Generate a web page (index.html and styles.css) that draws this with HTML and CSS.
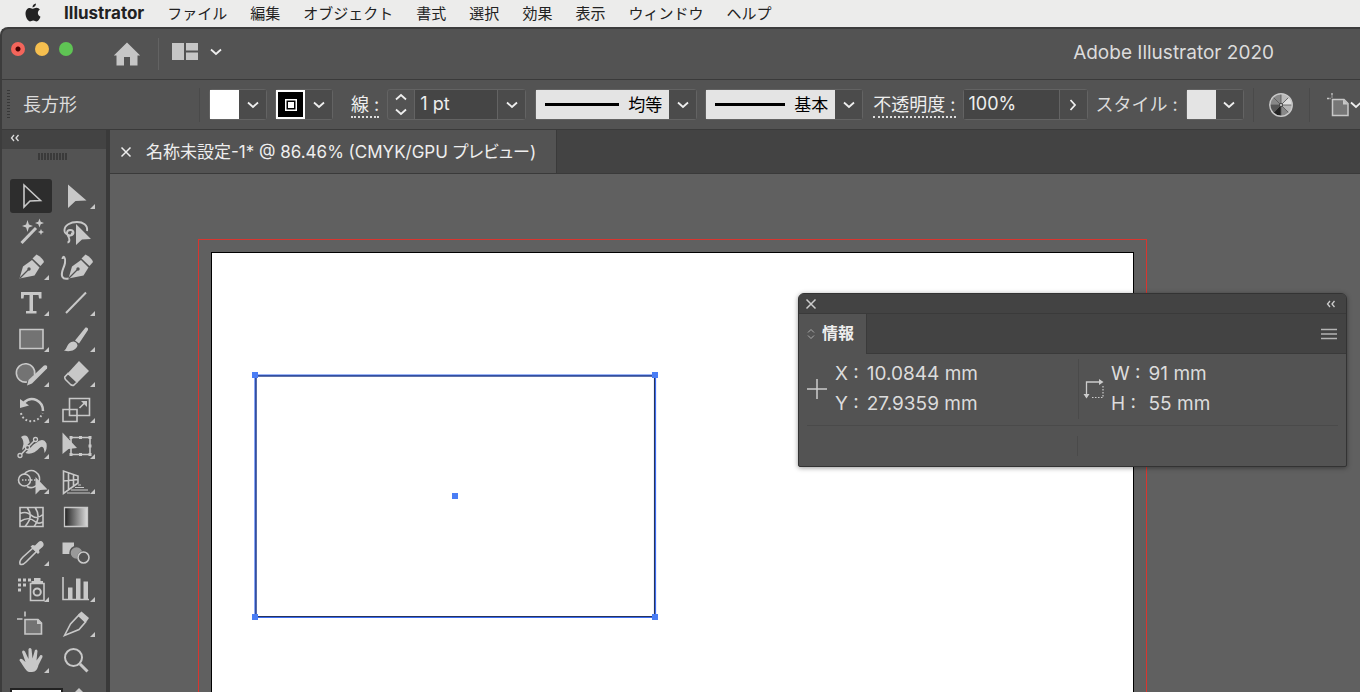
FILE: index.html
```html
<!DOCTYPE html>
<html lang="ja">
<head>
<meta charset="utf-8">
<title>Adobe Illustrator 2020</title>
<link rel="stylesheet" href="styles.css">
</head>
<body>
<svg width="0" height="0" class="defs" aria-hidden="true">
  <symbol id="chev" viewBox="0 0 12 8"><path d="M1 1.5 6 6 11 1.5" fill="none" stroke="currentColor" stroke-width="1.8"/></symbol>
  <symbol id="x" viewBox="0 0 12 12"><path d="M1.500 1.500 10.500 10.500M10.500 1.500 1.500 10.500" fill="none" stroke="currentColor" stroke-width="1.500"/></symbol>
  <symbol id="dbl" viewBox="0 0 10 8"><path d="M4 1 1.500 4 4 7M8.500 1 6 4 8.500 7" fill="none" stroke="currentColor" stroke-width="1.300"/></symbol>
  <linearGradient id="grad"><stop offset="0" stop-color="#222"/><stop offset="1" stop-color="#ddd"/></linearGradient>
</svg>

<nav class="menubar">
  <svg class="apple" viewBox="0 0 16 20"><path d="M11 .5c.1 2-1.600 3.900-3.500 3.900C7.300 2.500 9 .800 11 .5zM8 5.700c.8 0 1.900-1 3.500-1 1.400 0 2.700.8 3.400 1.900-3 1.700-2.500 5.900.6 7.100-.9 2.300-2.200 4.700-4 4.700-1.300 0-1.700-.8-3.300-.8s-2.100.8-3.300.8C2.800 18.400.5 14.200.5 10.600c0-3.700 2.200-5.700 4.300-5.700 1.400 0 2.500.8 3.200.8z" fill="#222"/></svg>
  <a href="#" class="app">Illustrator</a>
  <a href="#">ファイル</a><a href="#">編集</a><a href="#">オブジェクト</a><a href="#">書式</a><a href="#">選択</a><a href="#">効果</a><a href="#">表示</a><a href="#">ウィンドウ</a><a href="#">ヘルプ</a>
</nav>

<div class="window">
  <header class="titlebar">
    <div class="lights">
      <button class="light red" aria-label="閉じる"></button><button class="light yellow" aria-label="しまう"></button><button class="light green" aria-label="拡大"></button>
    </div>
    <button class="plain home" aria-label="ホーム"><svg width="28" height="24" viewBox="0 0 28 24"><path d="M14 .5 .8 13.500H3.500V23.500H11V15H17V23.500H24.500V13.500H27.200z" fill="#c6c6c6"/></svg></button>
    <button class="plain arrange" aria-label="ドキュメントレイアウト"><svg width="26" height="18" viewBox="0 0 26 18"><path d="M0 0H12V17H0zM14 0H26V7.500H14zM14 9.500H26V17H14z" fill="#c6c6c6"/></svg><svg class="chev"><use href="#chev"/></svg></button>
    <h1>Adobe Illustrator 2020</h1>
  </header>

  <section class="control">
    <span class="grip"></span>
    <span class="kind">長方形</span>
    <span class="rule"></span>
    <div class="combo fill"><button class="swatch white" aria-label="塗り"></button><button class="drop" aria-label="塗りを選択"><svg class="chev"><use href="#chev"/></svg></button></div>
    <div class="combo stroke"><button class="swatch black" aria-label="線の色"><svg width="12" height="12" viewBox="0 0 12 12"><path d="M.75.75h10.500v10.500H.75z" fill="none" stroke="#fff" stroke-width="1.500"/><path d="M3 3h6v6H3z" fill="#fff"/></svg></button><button class="drop" aria-label="線の色を選択"><svg class="chev"><use href="#chev"/></svg></button></div>
    <label class="link" for="weight">線 :</label>
    <div class="combo weight">
      <span class="steps"><button class="plain" aria-label="増やす"><svg class="chev up"><use href="#chev"/></svg></button><button class="plain" aria-label="減らす"><svg class="chev"><use href="#chev"/></svg></button></span>
      <input id="weight" type="text" value="1 pt">
      <button class="drop" aria-label="線幅を選択"><svg class="chev"><use href="#chev"/></svg></button>
    </div>
    <div class="combo profile"><select aria-label="可変線幅プロファイル"><option>均等</option></select><button class="drop" aria-label="プロファイルを選択"><svg class="chev"><use href="#chev"/></svg></button></div>
    <div class="combo brush"><select aria-label="ブラシ定義"><option>基本</option></select><button class="drop" aria-label="ブラシを選択"><svg class="chev"><use href="#chev"/></svg></button></div>
    <label class="link" for="opacity">不透明度 :</label>
    <div class="combo opacity"><input id="opacity" type="text" value="100%"><button class="drop" aria-label="不透明度を変更"><svg class="chev side"><use href="#chev"/></svg></button></div>
    <span class="style-label">スタイル :</span>
    <div class="combo"><button class="swatch pale" aria-label="スタイル"></button><button class="drop" aria-label="スタイルを選択"><svg class="chev"><use href="#chev"/></svg></button></div>
    <span class="rule after"></span>
    <button class="plain wheel" aria-label="オブジェクトを再配色"><svg width="26" height="26" viewBox="0 0 26 26"><circle cx="13" cy="13" r="11" fill="#888"/><path d="M13 13V2A11 11 0 0 1 21 5.500z" fill="#bbb"/><path d="M13 13 21 5.500A11 11 0 0 1 24 13z" fill="#ddd"/><path d="M13 13H24A11 11 0 0 1 21 20.500z" fill="#b4b4b4"/><path d="M13 13V24A11 11 0 0 1 5.500 21z" fill="#222"/><path d="M13 13 5.500 21A11 11 0 0 1 2 13z" fill="#555"/><path d="M13 2V24M2 13H24M5.200 5.200 20.800 20.800M20.800 5.200 5.200 20.800" stroke="#555" stroke-width=".8"/><circle cx="13" cy="13" r="2" fill="#444"/><circle cx="13" cy="13" r="1" fill="#ddd"/><circle cx="13" cy="13" r="11.200" fill="none" stroke="#c8c8c8" stroke-width="1.500"/></svg></button>
    <span class="rule"></span>
    <button class="plain align" aria-label="アートボードに整列"><svg width="24" height="24" viewBox="0 0 24 24"><path d="M6.500 6.500H18L22 10.500V22.500H6.500z" fill="#777" stroke="#c8c8c8" stroke-width="1.500"/><path d="M17 6.500V11.500H22z" fill="#c8c8c8"/><path d="M6 0V2.500M6 3.500V4.500M1 5.500H3.500M4.500 5.500H5" stroke="#c8c8c8" stroke-width="1.300"/></svg><svg class="chev"><use href="#chev"/></svg></button>
  </section>

  <main class="work">
    <aside class="tools">
      <div class="tools-head"><button class="plain" aria-label="折りたたむ"><svg width="10" height="8"><use href="#dbl"/></svg></button></div>
      <div class="tools-body">
        <span class="handle"></span>
        <div class="grid">
          <button class="tool on" aria-label="選択"><svg viewBox="0 0 42 34"><path d="M14 6V28L20 22 30.500 21.500z" class="o"/></svg></button>
          <button class="tool more" aria-label="ダイレクト選択"><svg viewBox="0 0 42 34"><path d="M12 5.500V29L19.500 22 30.500 21.500z" class="f"/></svg></button>

          <button class="tool" aria-label="自動選択"><svg viewBox="0 0 42 34"><path d="M11.500 28 26 13" class="o" stroke-width="3"/><path d="M17.500 5 18.900 9.600 23 11 18.900 12.400 17.500 17 16.100 12.400 12 11 16.100 9.600zM29.500 3.500 30.700 6.800 34 8 30.700 9.200 29.500 12.500 28.300 9.200 25 8 28.300 6.800zM31 14 31.900 16.100 34 17 31.900 17.900 31 20 30.100 17.900 28 17 30.100 16.100z" class="f"/></svg></button>
          <button class="tool" aria-label="なげなわ"><svg viewBox="0 0 42 34"><path d="M31 16C32 10 27 7 21 7S8 10 8.500 16C9 20 17 22.500 17.500 18 17.500 14 11 14 11 18 11 21.500 16.500 22 16 17.500M11.500 20C13.500 23 14.500 27 11.500 27.500" class="o" stroke-width="1.9"/><path d="M20 9V30L26 24.500 35 24z" class="f"/></svg></button>

          <button class="tool more" aria-label="ペン"><svg viewBox="0 0 42 34"><g id="nib"><path d="M9.500 28.500 13 16.500 22 10 29.500 17.500 24.500 25.500z" class="f"/><path d="M10 28 18.500 19.500" stroke="#535353" stroke-width="1.300"/><circle cx="19" cy="19" r="1.700" fill="#535353"/><path d="M22.500 8.500 26.500 4.500Q33 8 34 12L30.500 16z" class="f"/></g></svg></button>
          <button class="tool" aria-label="曲線"><svg viewBox="0 0 42 34"><use href="#nib" x="3"/><path d="M6.500 9C7 4.500 10 7.500 9 13S4 23 6.500 27C7.500 29 10 29 12.500 28.500" class="o" stroke-width="2"/></svg></button>

          <button class="tool more" aria-label="文字"><svg viewBox="0 0 42 34"><path d="M11 6H31.500V12.500H29L28.500 9H23V25H26.500V27.500H16V25H19.500V9H14L13.500 12.500H11z" class="f"/></svg></button>
          <button class="tool more" aria-label="直線"><svg viewBox="0 0 42 34"><path d="M10 27 30 6.500" class="o" stroke-width="2"/></svg></button>

          <button class="tool more" aria-label="長方形"><svg viewBox="0 0 42 34"><path d="M10 7.500H33V26.500H10z" class="o g"/></svg></button>
          <button class="tool more" aria-label="ブラシ"><svg viewBox="0 0 42 34"><path d="M19 18.500 29.500 5.500Q32.500 5 32 8L23 21.500zM17.500 19.500Q21 20 21.500 23.500C20 29 13 30 8 28.500 11.500 27.500 10.500 20 17.500 19.500z" class="f"/></svg></button>

          <button class="tool more" aria-label="Shaper"><svg viewBox="0 0 42 34"><path d="M17 25A9.200 9.200 0 1 1 24.500 18" class="o g"/><path d="M17 28.500 18.500 23 34 8.500Q38 7.500 37 11.500L22 26.500z" class="f"/></svg></button>
          <button class="tool more" aria-label="消しゴム"><svg viewBox="0 0 42 34"><path d="M23 4 33 14 21.500 25.500 12 16z" class="f"/><path d="M12 16.500 8.800 20Q8.500 21 9.500 22.500L14.500 27.500Q16.500 29 18 28L21 25z" class="o"/></svg></button>

          <button class="tool more" aria-label="回転"><svg viewBox="0 0 42 34"><path d="M14 9.500C22 2 33 8 33 18" class="o" stroke-width="2.500"/><path d="M10 6V15L19 12.500z" class="f"/><path d="M11 20C13 30 28 32 32.500 20" class="o" stroke-width="2" stroke-dasharray="1.800 2.300"/></svg></button>
          <button class="tool more" aria-label="拡大・縮小"><svg viewBox="0 0 42 34"><path d="M13.500 5.500H33.500V22.500H13.500zM7 16.500H21V28.500H7zM23.500 15 29 9.500" class="o"/><path d="M25 8H31V14z" class="f"/></svg></button>

          <button class="tool more" aria-label="線幅"><svg viewBox="0 0 42 34"><path d="M11 8Q17 4 19 11 20.500 18 26 14 33 8 36.500 14.500 37.500 20 34.500 24 34 15 29.500 19 24 25.500 17 24.500 10.500 23 13 17 14.500 12 11 8z" class="f"/><path d="M10 26.500 25.500 10.500" stroke="#535353" stroke-width="4"/><path d="M10 26.500 25.500 10.500" class="o"/><g fill="#535353"><circle cx="10" cy="26.500" r="2" class="ring"/><circle cx="17.500" cy="18.500" r="2" class="ring"/><circle cx="25.500" cy="10.500" r="2" class="ring"/></g></svg></button>
          <button class="tool more" aria-label="自由変形"><svg viewBox="0 0 42 34"><path d="M15 8.500H34V25.500H15z" class="o"/><path d="M6.500 3.500V25L12.500 20 21 19z" class="f"/><path d="M13.500 7h3v3h-3zM23 7h3v3h-3zM32.500 7h3v3h-3zM32.500 15.500h3v3h-3zM32.500 24h3v3h-3zM23 24h3v3h-3zM13.500 24h3v3h-3z" class="f"/></svg></button>

          <button class="tool more" aria-label="シェイプ形成"><svg viewBox="0 0 42 34"><path d="M14 9.500A8.500 8.500 0 1 1 17 21.500" class="o"/><circle cx="14.500" cy="15" r="6" class="o"/><path d="M12 15H26" class="o" stroke-dasharray="1.500 1.500"/><path d="M25.500 12V29.500L30 25 37.500 24.500z" class="f"/></svg></button>
          <button class="tool more" aria-label="遠近グリッド"><svg viewBox="0 0 42 34"><path d="M7.500 6V28.500L22 18V11zM12.500 8V25M17.500 9.500V21M7.500 16 22 14.500" class="o"/><path d="M22 20H25M19 22.500H28M15 25H32M11 28H34" class="o" stroke-width="1"/></svg></button>

          <button class="tool" aria-label="メッシュ"><svg viewBox="0 0 42 34"><path d="M10 7.500H33V26.500H10zM10 13.500C17 11 19 14 23 16.500S30 17 33 14.500M10 21.500C17 17 21 18 25 21.500S31 22.500 33 22M17 7.500C21.500 13 22 19 15 26.500M25 7.500C29 13 29 20 24 26.500" class="o"/></svg></button>
          <button class="tool" aria-label="グラデーション"><svg viewBox="0 0 42 34"><path d="M8.500 7.500H31.500V26.500H8.500z" fill="url(#grad)" stroke="#c8c8c8" stroke-width="1.300"/></svg></button>

          <button class="tool more" aria-label="スポイト"><svg viewBox="0 0 42 34"><path d="M10 28C9 25 11 23 13 21L23 12 26.500 15.500 16 26C14 28 12 29.500 10 28z" class="o"/><path d="M20.500 10.500 22.500 9 25 9.500 28.500 6Q31 4 33 6.500 34.500 9 32.500 11L29 14 29.500 16.500 28 18z" class="f"/></svg></button>
          <button class="tool" aria-label="ブレンド"><svg viewBox="0 0 42 34"><path d="M6.500 6.500H18V18H6.500z" class="f"/><circle cx="20.500" cy="17" r="6.500" fill="#999" stroke="#535353" stroke-width="1.500"/><circle cx="27.500" cy="21.500" r="6.500" fill="#535353"/><circle cx="27.500" cy="21.500" r="5.500" class="o"/></svg></button>

          <button class="tool more" aria-label="シンボルスプレー"><svg viewBox="0 0 42 34"><path d="M8 6.500h3v3H8zM13 6.500h3v3h-3zM18 6.500h3v3h-3zM8 11.500h3v3H8zM13 11.500h3v3h-3zM8 16.500h3v3H8zM24 6h6.500v3H33v2H21.500V9H24z" class="f"/><path d="M20.500 11.500H34V28.500H20.500z" class="o"/><circle cx="27.200" cy="20" r="3.600" class="o" stroke-width="2"/></svg></button>
          <button class="tool more" aria-label="棒グラフ"><svg viewBox="0 0 42 34"><path d="M7 5V27.500H33" class="o"/><path d="M12 15.500h4.500V27H12zM20 6.500h4.500V27H20zM27.500 9.500H32V27h-4.500z" class="f"/></svg></button>

          <button class="tool" aria-label="アートボード"><svg viewBox="0 0 42 34"><path d="M15 12.500H28L31.500 16V27H15z" class="o g"/><path d="M27 12V17H32z" class="f"/><path d="M7 12H12.500M15 4.500V9.500" class="o"/></svg></button>
          <button class="tool more" aria-label="スライス"><svg viewBox="0 0 42 34"><path d="M8.500 28.500 14.500 17 22.500 8.500 29.500 15 23 22.500z" class="o"/><path d="M22 7.500 25.500 4.500 33 11 29.500 16z" class="f"/></svg></button>

          <button class="tool more" aria-label="手のひら"><svg viewBox="0 0 42 34"><path d="M17 28C14 25 12 20.500 9.500 17.500Q9.500 15 12 16L15.500 19 12 9Q13 6.500 15 8.500L18.500 16 18.500 6Q20 4 21.500 6L22.500 15.500 25 7Q27 5.500 27.500 8L26.500 17.500 30.500 12Q33 11.500 32.500 14L28.500 22C27.500 26 26 29 22 29 19.500 29 18 29 17 28z" class="f"/></svg></button>
          <button class="tool" aria-label="ズーム"><svg viewBox="0 0 42 34"><circle cx="17.500" cy="14.500" r="8.500" class="o" stroke-width="2"/><path d="M24 21 31.500 28.500" class="o" stroke-width="3"/></svg></button>
        </div>
        <div class="colors"><span class="fillbox"></span><svg width="8" height="4" viewBox="0 0 8 4"><path d="M0 4 4 0 8 4z" fill="#c8c8c8"/></svg></div>
      </div>
    </aside>

    <section class="doc">
      <div class="tabs"><div class="tab"><button class="plain" aria-label="閉じる"><svg width="12" height="12"><use href="#x"/></svg></button><span>名称未設定-1* @ 86.46% (CMYK/GPU プレビュー)</span></div></div>
      <div class="canvas">
        <div class="bleed"></div>
        <div class="artboard"></div>
        <svg class="selection" viewBox="0 0 408 250"><path d="M4.500 4.500H404V246H4.500z" fill="none" stroke="#3c6cf0" stroke-width="2.200"/><path d="M5 5H403.500V245.500H5z" fill="none" stroke="#26335c" stroke-width="1"/><path d="M1 1h6v6H1zM401 1h6v6h-6zM1 243h6v6H1zM401 243h6v6h-6zM201 122h6v6h-6z" fill="#4a7df5"/></svg>
        <aside class="info">
          <div class="info-head"><button class="plain" aria-label="閉じる"><svg width="12" height="12"><use href="#x"/></svg></button><button class="plain" aria-label="折りたたむ"><svg width="10" height="8"><use href="#dbl"/></svg></button></div>
          <div class="info-tabs">
            <div class="info-tab"><svg width="8" height="12" viewBox="0 0 8 12"><path d="M1 4.500 4 1.500 7 4.500M1 7.500 4 10.500 7 7.500" fill="none" stroke="#aaa"/></svg><span>情報</span></div>
            <button class="plain" aria-label="メニュー"><svg width="16" height="12" viewBox="0 0 16 12"><path d="M0 1.500H16M0 6H16M0 10.500H16" stroke="#b4b4b4" stroke-width="1.300"/></svg></button>
          </div>
          <div class="info-body">
            <div class="cell"><svg width="20" height="20" viewBox="0 0 20 20"><path d="M10 0V20M0 10H20" stroke="#ccc" stroke-width="1.500"/></svg>
              <dl><dt>X :</dt><dd>10.0844 mm</dd><dt>Y :</dt><dd>27.9359 mm</dd></dl></div>
            <div class="cell size"><svg width="22" height="22" viewBox="0 0 22 22"><path d="M3.500 18V4H17" fill="none" stroke="#ccc" stroke-width="1.300"/><path d="M16 1 20.500 4 16 7zM.5 16H6.500L3.500 20.500z" fill="#ccc"/><path d="M9 19.500H20V8" fill="none" stroke="#ccc" stroke-width="1.200" stroke-dasharray="1.500 1.500"/></svg>
              <dl><dt>W :</dt><dd>91 mm</dd><dt>H :</dt><dd>55 mm</dd></dl></div>
          </div>
          <div class="info-foot"><span></span></div>
        </aside>
      </div>
    </section>
  </main>
</div>
</body>
</html>
```
FILE: styles.css
```css
* { box-sizing: border-box; }
:root {
  --bg: #535353;
  --dark: #434343;
  --line: #3a3a3a;
  --text: #dcdcdc;
}
body {
  margin: 0;
  height: 100vh;
  display: flex;
  flex-direction: column;
  overflow: hidden;
  background: #ececeb;
  color: var(--text);
  font-family: Inter, "Noto Sans CJK JP", sans-serif;
  font-size: 17px;
}
button, input, select { font: inherit; color: inherit; margin: 0; }
.defs { position: absolute; }
svg { display: block; flex: none; }
.plain { display: flex; align-items: center; padding: 0; border: 0; background: none; }
.chev { width: 12px; height: 8px; color: #eee; }
.up { transform: rotate(180deg); }
.side { transform: rotate(-90deg); }

.menubar {
  flex: none;
  display: flex;
  align-items: center;
  gap: 23px;
  height: 27px;
  padding: 0 0 2px 25px;
  font-size: 15px;
  white-space: nowrap;
}
.menubar a { color: #222; text-decoration: none; }
.menubar .app { font-size: 17px; font-weight: 700; }
.apple { width: 16px; height: 20px; }

.window {
  flex: 1;
  min-height: 0;
  display: flex;
  flex-direction: column;
  background: var(--bg);
  border: solid #3c3c3c;
  border-width: 2px 0 0 2px;
  border-radius: 8px 0 0 0;
  overflow: hidden;
}
.titlebar {
  flex: none;
  display: flex;
  align-items: center;
  height: 51px;
  padding: 0 86px 0 9px;
  border-bottom: 1px solid var(--line);
}
.lights { display: flex; gap: 10px; align-self: flex-start; padding-top: 13px; }
.light { width: 14px; height: 14px; padding: 0; border: 0; border-radius: 50%; }
.red { background: radial-gradient(circle, #400 0 2px, #f4655b 3px); }
.yellow { background: #f6bf4f; }
.green { background: #5fc454; }
.home { margin-left: 40px; padding-right: 17px; height: 32px; border-right: 1px solid #636363; }
.arrange { margin-left: 13px; padding-bottom: 4px; gap: 12px; }
.titlebar h1 { margin: 0 0 0 auto; padding-bottom: 3px; font-size: 19px; font-weight: 400; }

.control {
  flex: none;
  display: flex;
  align-items: center;
  height: 50px;
  padding-left: 5px;
  border-bottom: 1px solid var(--line);
  white-space: nowrap;
}
.control > * { flex: none; }
.grip { width: 3px; height: 30px; background: repeating-linear-gradient(#383838 0 1px, transparent 1px 3px); }
.kind { width: 189px; padding: 0 0 3px 13px; font-size: 18px; }
.rule { width: 1px; height: 34px; background: #4a4a4a; }
.combo { display: flex; height: 31px; border: 1px solid #636363; border-radius: 3px; }
.fill { margin: 0 8px 0 9px; }
.swatch { width: 29px; padding: 0; border: 0; display: grid; place-items: center; }
.white { background: #fff; }
.black { background: #000; border: 2px solid #fff; }
.pale { background: #e4e4e4; }
.drop { width: 27px; padding: 0; border: 0; background: #4b4b4b; display: grid; place-items: center; }
.link { margin: 3px 8px 0 18px; border-bottom: 2px dotted #ddd; font-size: 18px; line-height: 22px; color: #eee; }
.steps { display: flex; flex-direction: column; justify-content: space-around; align-items: center; width: 26px; }
.combo input { padding: 0 5px 3px; border: solid #636363; border-width: 0 1px; border-radius: 0; background: #454545; color: #eee; font-size: 18px; }
.weight input { width: 84px; }
.opacity input { width: 96px; border-left: 0; }
.profile { margin: 0 8px 0 9px; }
.combo select {
  width: 133px;
  padding: 0 7px 0 0;
  border: 0;
  border-radius: 0;
  appearance: none;
  background: linear-gradient(#000, #000) 9px 50% / 74px 3px no-repeat #e4e4e4;
  color: #000;
  text-align: right;
  text-align-last: right;
}
.brush select { width: 129px; background-size: 70px 3px; }
.brush + .link { margin: 3px 7px 0 10px; }
.style-label { margin: 0 8px; padding-bottom: 3px; font-size: 18px; }
.after { margin-left: 9px; }
.wheel { margin: 0 15px 0 14px; }
.align { margin-left: 16px; }

.work { flex: 1; min-height: 0; display: flex; }
.tools { flex: none; width: 108px; border-right: 4px solid var(--line); overflow: hidden; }
.tools-head { height: 19px; padding: 4px 8px; background: var(--dark); }
.tools-body { padding-left: 6px; }
.handle { display: block; width: 30px; height: 7px; margin: 4px 0 18px 30px; background: repeating-linear-gradient(90deg, #3a3a3a 0 2px, transparent 2px 3px); }
.grid { display: grid; grid-template-columns: 46px 46px; grid-auto-rows: 1fr; height: 500px; }
.tool { position: relative; display: grid; place-items: center; padding: 0; border: 0; background: none; }
.tool svg { width: 42px; height: 34px; border-radius: 3px; }
.on svg { background: #2d2d2d; }
.more::after { content: ""; position: absolute; right: 5px; bottom: 5px; border: solid #c8c8c8; border-width: 0 0 5px 5px; border-left-color: transparent; }
.f { fill: #c8c8c8; }
.o { fill: none; stroke: #c8c8c8; }
.o:not([stroke-width]) { stroke-width: 1.6px; }
.g { fill: #737373; }
.ring { stroke: #c8c8c8; stroke-width: 1.3px; }
.colors { display: flex; gap: 12px; align-items: flex-start; padding: 10px 0 0 2px; }
.fillbox { width: 53px; height: 40px; background: #fff; border: 2px solid #222; }

.doc { flex: 1; min-width: 0; display: flex; flex-direction: column; }
.tabs { flex: none; display: flex; height: 44px; background: var(--dark); border-bottom: 1px solid var(--line); }
.tab { display: flex; align-items: center; gap: 14px; padding: 0 20px 0 10px; background: var(--bg); border-right: 1px solid var(--line); color: #eee; white-space: nowrap; }
.tab span { padding-bottom: 2px; font-feature-settings: "palt"; }
.canvas { position: relative; flex: 1; background: #606060; overflow: hidden; }
.bleed { position: absolute; left: 88px; top: 65px; width: 949px; height: 600px; border: 1px solid #d9352f; }
.artboard { position: absolute; left: 101px; top: 78px; width: 923px; height: 600px; border: 1px solid #000; background: #fff; }
.selection { position: absolute; left: 141px; top: 197px; width: 408px; height: 250px; }
.info { position: absolute; left: 688px; top: 119px; width: 549px; background: var(--bg); border: 1px solid #333; border-radius: 6px 6px 2px 2px; box-shadow: 0 1px 5px rgba(0, 0, 0, .4); overflow: hidden; }
.info-head { display: flex; justify-content: space-between; align-items: center; height: 20px; padding: 0 10px 0 6px; background: var(--dark); border-bottom: 1px solid var(--line); color: #ccc; }
.info-tabs { display: flex; justify-content: space-between; align-items: center; height: 40px; padding-right: 9px; background: var(--dark); border-bottom: 1px solid var(--line); }
.info-tab { display: flex; align-items: center; gap: 7px; height: 40px; padding: 0 12px 0 8px; background: var(--bg); border-right: 1px solid var(--line); color: #eee; font-size: 16px; font-weight: 700; }
.info-tab span { padding-bottom: 3px; }
.info-body { display: grid; grid-template-columns: 271px 1fr; margin: 0 8px; padding: 5px 0 6px; border-bottom: 1px solid #4a4a4a; }
.cell { display: flex; align-items: center; gap: 8px; }
.size { padding-left: 4px; gap: 6px; border-left: 1px solid #4a4a4a; }
dl { display: grid; grid-template-columns: auto auto; column-gap: 8px; margin: 0; font-size: 19px; line-height: 30px; }
dd { margin: 0; }
.info-foot { display: grid; grid-template-columns: 271px 1fr; height: 40px; padding: 10px 8px; }
.info-foot span { border-right: 1px solid #4a4a4a; }
```
